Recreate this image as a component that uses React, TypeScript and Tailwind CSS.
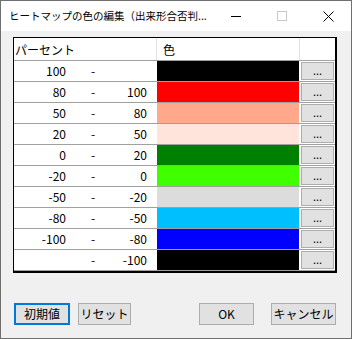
import React from "react";

const rows: { a: string; b: string; color: string }[] = [
  { a: "100", b: "", color: "#000000" },
  { a: "80", b: "100", color: "#ff0000" },
  { a: "50", b: "80", color: "#ffa88a" },
  { a: "20", b: "50", color: "#ffe4dc" },
  { a: "0", b: "20", color: "#008000" },
  { a: "-20", b: "0", color: "#40ff00" },
  { a: "-50", b: "-20", color: "#dcdcdc" },
  { a: "-80", b: "-50", color: "#00bfff" },
  { a: "-100", b: "-80", color: "#0000ff" },
  { a: "", b: "-100", color: "#000000" },
];

const font = { fontFamily: '"Noto Sans CJK JP", "Noto Sans", sans-serif' };

export default function App() {
  return (
    <div
      className="w-[352px] h-[339px] border border-[#6f6f6f] bg-[#f0f0f0] flex flex-col text-[12px] text-black overflow-hidden"
      style={font}
    >
      {/* title bar */}
      <div className="h-[30px] bg-white flex items-center shrink-0">
        <div className="flex-1 min-w-0 pl-[8px] text-[10.5px] leading-none whitespace-nowrap">
          ヒートマップの色の編集（出来形合否判...
        </div>
        <div className="w-[46px] h-full flex items-center justify-center">
          <div className="w-[10px] h-px bg-black" />
        </div>
        <div className="w-[46px] h-full flex items-center justify-center">
          <div className="w-[10px] h-[10px] border border-[#c8c8c8]" />
        </div>
        <div className="w-[46px] h-full flex items-center justify-center">
          <svg width="11" height="11" viewBox="0 0 11 11">
            <path d="M0.5 0.5 L10.5 10.5 M10.5 0.5 L0.5 10.5" stroke="#000" strokeWidth="1" />
          </svg>
        </div>
      </div>

      {/* table */}
      <div className="ml-[12px] mt-[6px] w-[324px] border-t border-l border-r-2 border-b-2 border-black bg-white">
        <div className="flex h-[23px] border-b border-[#a0a0a0]">
          <div className="w-[143px] border-r border-[#e3e3e3] pl-[1px] flex items-center pt-[2px] leading-none">
            パーセント
          </div>
          <div className="w-[143px] border-r border-[#e3e3e3] pl-[6px] flex items-center pt-[2px] leading-none">
            色
          </div>
          <div className="w-[35px]" />
        </div>
        {rows.map((r, i) => (
          <div key={i} className="flex h-[21px] border-b border-[#a0a0a0]">
            <div className="w-[143px] flex items-center leading-none">
              <div className="w-[52px] text-right">{r.a}</div>
              <div className="w-[54px] text-center">-</div>
              <div className="w-[27px] text-right">{r.b}</div>
            </div>
            <div className="w-[142px]" style={{ backgroundColor: r.color }} />
            <div className="w-[36px] flex items-center justify-center pl-[1px]">
              <div className="w-[33px] h-[18px] bg-[#e1e1e1] border border-[#adadad] flex items-end justify-center pb-[3px] leading-none text-[11px]">
                ...
              </div>
            </div>
          </div>
        ))}
      </div>

      {/* buttons */}
      <div className="flex mt-[30px] pl-[13px] pr-[15px] h-[22px]">
        <button className="w-[56px] h-[22px] bg-[#e1e1e1] border-2 border-[#0078d7] flex items-center justify-center leading-none">
          初期値
        </button>
        <button className="ml-[8px] w-[53px] h-[22px] bg-[#e1e1e1] border border-[#adadad] flex items-center justify-center leading-none">
          リセット
        </button>
        <div className="flex-1" />
        <button className="w-[55px] h-[22px] bg-[#e1e1e1] border border-[#adadad] flex items-center justify-center leading-none">
          OK
        </button>
        <button className="ml-[17px] w-[65px] h-[22px] bg-[#e1e1e1] border border-[#adadad] flex items-center justify-center leading-none">
          キャンセル
        </button>
      </div>
    </div>
  );
}
